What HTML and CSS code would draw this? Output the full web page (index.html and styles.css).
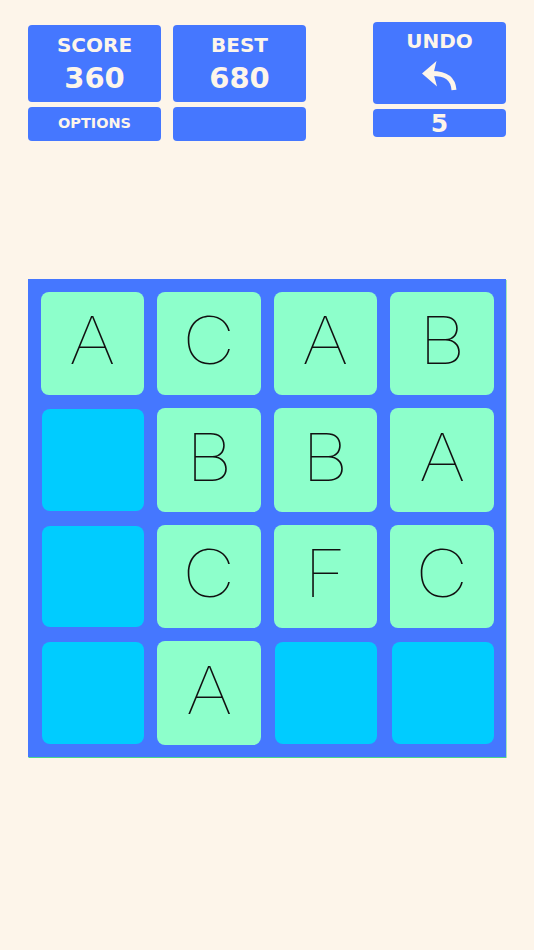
FILE: index.html
```html
<!DOCTYPE html>
<html>
<head>
<meta charset="utf-8">
<link rel="stylesheet" href="styles.css">
</head>
<body>
<div class="header">
  <div class="col">
    <div class="box stat"><div class="label">SCORE</div><div class="value">360</div></div>
    <div class="box small">OPTIONS</div>
  </div>
  <div class="col">
    <div class="box stat"><div class="label">BEST</div><div class="value">680</div></div>
    <div class="box small"></div>
  </div>
  <div class="col undo-col">
    <div class="box undo">
      <div class="label">UNDO</div>
      <svg class="arrow" width="38" height="34" viewBox="0 0 38 34">
        <path d="M11 15.5 C 25 15.5, 32 20, 33 32" fill="none" stroke="#fdf5ea" stroke-width="5"/>
        <path d="M1 15.5 L15.5 3 L12.5 15.5 L16 28.5 Z" fill="#fdf5ea"/>
      </svg>
    </div>
    <div class="box count">5</div>
  </div>
</div>
<div class="board">
  <div class="tile"><span>A</span></div>
  <div class="tile"><span>C</span></div>
  <div class="tile"><span>A</span></div>
  <div class="tile"><span>B</span></div>
  <div class="tile empty"></div>
  <div class="tile"><span>B</span></div>
  <div class="tile"><span>B</span></div>
  <div class="tile"><span>A</span></div>
  <div class="tile empty"></div>
  <div class="tile"><span>C</span></div>
  <div class="tile"><span>F</span></div>
  <div class="tile"><span>C</span></div>
  <div class="tile empty"></div>
  <div class="tile"><span>A</span></div>
  <div class="tile empty"></div>
  <div class="tile empty"></div>
</div>
</body>
</html>
```
FILE: styles.css
```css
html, body {
  margin: 0;
  padding: 0;
  background: #fdf5ea;
}
body {
  width: 534px;
  height: 950px;
  font-family: "DejaVu Sans", Verdana, sans-serif;
}
.header {
  display: flex;
  align-items: flex-start;
  padding-left: 28px;
}
.col {
  display: flex;
  flex-direction: column;
  gap: 5px;
  width: 133px;
  margin-top: 25px;
  margin-right: 12px;
}
.undo-col {
  margin-top: 22px;
  margin-left: 55px;
  margin-right: 0;
}
.box {
  background: #4577ff;
  border-radius: 4px;
  color: #fdf5ea;
  font-weight: bold;
  text-align: center;
}
.stat {
  height: 77px;
  display: flex;
  flex-direction: column;
  align-items: center;
}
.stat .label {
  font-size: 20px;
  line-height: 20px;
  margin-top: 10px;
}
.stat .value {
  font-size: 29px;
  line-height: 30px;
  margin-top: 8px;
}
.small {
  height: 34px;
  font-size: 14.5px;
  line-height: 32px;
}
.undo {
  height: 82px;
  display: flex;
  flex-direction: column;
  align-items: center;
}
.undo .label {
  font-size: 20px;
  line-height: 20px;
  margin-top: 9px;
}
.arrow {
  display: block;
  margin-top: 7px;
  margin-left: 1px;
}
.count {
  height: 28px;
  font-size: 25px;
  line-height: 30px;
}
.board {
  margin-top: 138px;
  margin-left: 28px;
  width: 478px;
  height: 478px;
  box-sizing: border-box;
  background: #4577ff;
  padding: 12.5px;
  display: grid;
  grid-template-columns: repeat(4, 1fr);
  grid-template-rows: repeat(4, 1fr);
  gap: 13px;
  box-shadow: 0.5px 1px 0 #4cd68a;
}
.tile {
  background: #8dffcb;
  border-radius: 8px;
  display: flex;
  align-items: center;
  justify-content: center;
  font-family: "Inter", "Roboto", sans-serif;
  font-weight: 100;
  font-size: 66px;
  color: #111;
  line-height: 1;
  padding-bottom: 6px;
  box-sizing: border-box;
}
.tile span {
  display: block;
  transform: scaleX(1.1);
}
.empty {
  background: #00ccff;
  margin: 1px 0 1px 1.5px;
  padding: 0;
}
```
